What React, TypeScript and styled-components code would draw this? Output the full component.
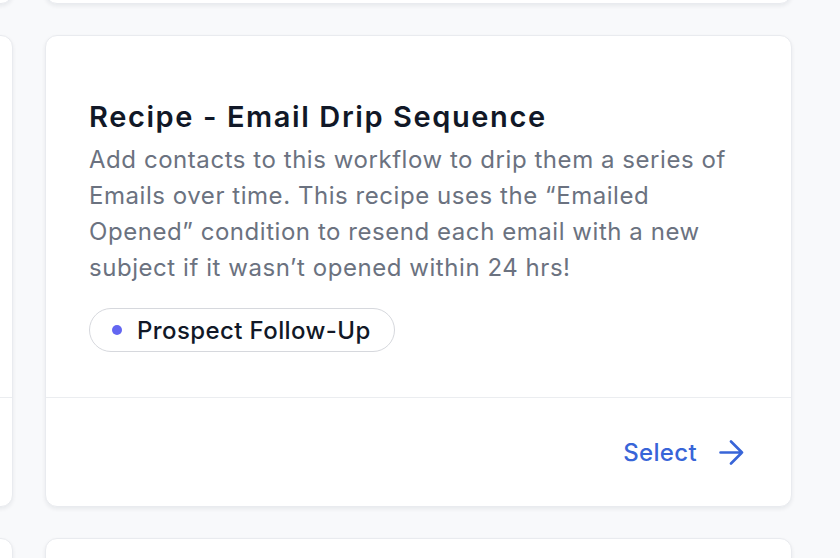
import React from "react";
import styled, { createGlobalStyle } from "styled-components";

const Global = createGlobalStyle`
  html, body {
    margin: 0;
    padding: 0;
    background: #f8f9fb;
    overflow: hidden;
    font-family: Inter, "Noto Sans", sans-serif;
    -webkit-font-smoothing: antialiased;
  }
`;

const Page = styled.div`
  width: 840px;
  height: 558px;
  overflow: hidden;
`;

const Grid = styled.div`
  display: grid;
  grid-template-columns: repeat(2, 747px);
  grid-auto-rows: 472px;
  column-gap: 32px;
  row-gap: 31px;
  margin-left: -734px;
  margin-top: -468px;
`;

const Card = styled.div`
  display: flex;
  flex-direction: column;
  box-sizing: border-box;
  background: #ffffff;
  border: 1px solid #e9ebef;
  border-radius: 12px;
  box-shadow: 0 2px 4px rgba(17, 24, 39, 0.07);
  overflow: hidden;
`;

const Body = styled.div`
  flex: 1;
  padding: 60px 44px 0 43px;
  display: flex;
  flex-direction: column;
  align-items: flex-start;
`;

const Title = styled.h3`
  margin: 0;
  font-size: 29px;
  line-height: 42px;
  font-weight: 600;
  color: #111827;
  letter-spacing: 1.6px;
`;

const Desc = styled.p`
  margin: 4px 0 0;
  font-size: 24px;
  line-height: 36px;
  font-weight: 400;
  color: #6b7280;
  max-width: 660px;
  letter-spacing: 0.55px;
`;

const Badge = styled.span`
  margin-top: 22px;
  display: inline-flex;
  align-items: center;
  gap: 15px;
  height: 44px;
  box-sizing: border-box;
  padding: 0 23px 0 22px;
  border: 1px solid #d6d8dd;
  border-radius: 999px;
  font-size: 24px;
  font-weight: 500;
  color: #111827;
  letter-spacing: 0.4px;
`;

const Dot = styled.span<{ $color: string }>`
  width: 10px;
  height: 10px;
  border-radius: 50%;
  background: ${(p) => p.$color};
`;

const Footer = styled.div`
  height: 108px;
  flex: none;
  border-top: 1px solid #ebedf0;
  display: flex;
  align-items: center;
  justify-content: flex-end;
  padding-right: 47px;
`;

const SelectButton = styled.button`
  display: inline-flex;
  align-items: center;
  gap: 22px;
  border: 0;
  background: none;
  padding: 0;
  font-family: inherit;
  font-size: 24px;
  font-weight: 500;
  color: #3865d8;
  cursor: pointer;
  letter-spacing: 0.35px;
`;

const Arrow = () => (
  <svg width="25" height="25" viewBox="0 0 25 25" fill="none">
    <path
      d="M1.5 12.5H23M12 1.5L23 12.5L12 23.5"
      stroke="#3865d8"
      strokeWidth="2.6"
      strokeLinecap="round"
      strokeLinejoin="round"
    />
  </svg>
);

const recipe = {
  title: "Recipe - Email Drip Sequence",
  desc:
    "Add contacts to this workflow to drip them a series of Emails over time. This recipe uses the \u201cEmailed Opened\u201d condition to resend each email with a new subject if it wasn\u2019t opened within 24 hrs!",
  tag: "Prospect Follow-Up",
  tagColor: "#6366f1",
};

const RecipeCard = () => (
  <Card>
    <Body>
      <Title>{recipe.title}</Title>
      <Desc>{recipe.desc}</Desc>
      <Badge>
        <Dot $color={recipe.tagColor} />
        {recipe.tag}
      </Badge>
    </Body>
    <Footer>
      <SelectButton>
        Select
        <Arrow />
      </SelectButton>
    </Footer>
  </Card>
);

export default function App() {
  return (
    <Page>
      <Global />
      <Grid>
        {Array.from({ length: 6 }).map((_, i) => (
          <RecipeCard key={i} />
        ))}
      </Grid>
    </Page>
  );
}
